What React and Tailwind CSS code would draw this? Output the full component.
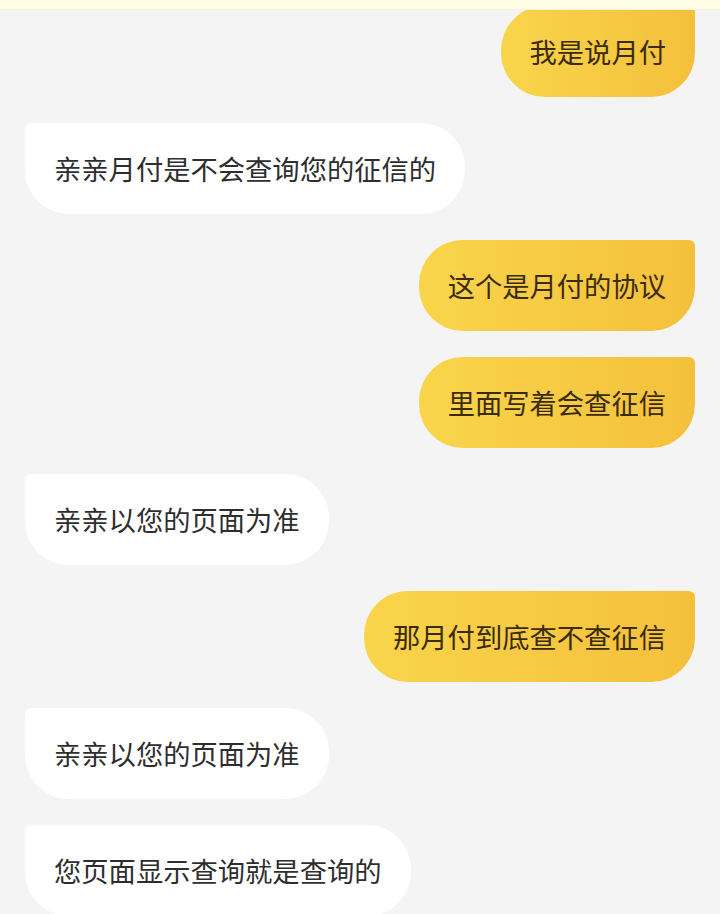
const messages = [
  { me: true, text: "我是说月付" },
  { me: false, text: "亲亲月付是不会查询您的征信的" },
  { me: true, text: "这个是月付的协议" },
  { me: true, text: "里面写着会查征信" },
  { me: false, text: "亲亲以您的页面为准" },
  { me: true, text: "那月付到底查不查征信" },
  { me: false, text: "亲亲以您的页面为准" },
  { me: false, text: "您页面显示查询就是查询的" },
];

const Bubble = ({ me, text }) => (
  <div className={`flex ${me ? "justify-end" : "justify-start"}`}>
    <div
      className={`h-[91px] px-[29px] flex items-center text-[27.3px] leading-none whitespace-nowrap ${
        me
          ? "rounded-[44px] rounded-tr-[6px] bg-gradient-to-r from-[#f9d54b] to-[#f4c03b] text-[#3a2b0c]"
          : "rounded-[44px] rounded-tl-[6px] bg-white text-[#2e2e2e]"
      }`}
    >
      {text}
    </div>
  </div>
);

export default function App() {
  return (
    <div
      className="relative w-[720px] h-[914px] overflow-hidden bg-[#f4f4f4]"
      style={{ fontFamily: '"Noto Sans CJK SC", "Noto Sans", sans-serif' }}
    >
      <div className="absolute top-0 left-0 right-0 h-[10px] bg-[#fffde6] border-b border-[#f7f1dc] z-10" />
      <div className="flex flex-col gap-[26px] pt-[6px] px-[25px]">
        {messages.map((m, i) => (
          <Bubble key={i} {...m} />
        ))}
      </div>
    </div>
  );
}
